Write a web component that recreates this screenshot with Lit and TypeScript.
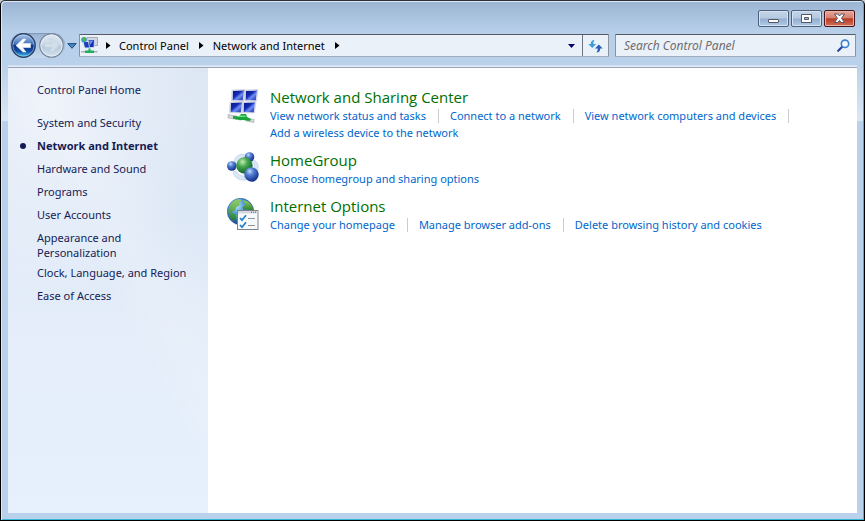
import { LitElement, html, css, svg } from 'lit';
import { customElement, state } from 'lit/decorators.js';

interface Category {
  title: string;
  icon: unknown;
  tasks: string[];
}

const networkIcon = html`<svg width="32" height="34" viewBox="0 0 32 34" aria-hidden="true">
  <defs>
    <linearGradient id="scr" x1="0" y1="0" x2="1" y2="1">
      <stop offset="0" stop-color="#0a1a86" /><stop offset=".4" stop-color="#1228b4" />
      <stop offset=".6" stop-color="#6f8ff4" /><stop offset="1" stop-color="#0d1fa4" />
    </linearGradient>
  </defs>
  ${[[5, 1], [18, 1], [3, 13], [16, 13]].map(([x, y]) => svg`
    <path d="M${x} ${y}l13-.5-1.500 11.500-12-.3z" fill="#dfe3ec" stroke="#b9bfcc" stroke-width=".5" />
    <path d="M${x + 1} ${y + 1}l11-.4-1.300 9.600-10-.2z" fill="url(#scr)" />`)}
  <path d="M1 25.500l9 1.500v3.500l-9-1.500z" fill="#d5d8dc" stroke="#8e949b" stroke-width=".5" />
  <path d="M19 29l8 1.500v3l-8-1.500z" fill="#d5d8dc" stroke="#8e949b" stroke-width=".5" />
  <path d="M6 27l6 .5 2-2.500h5l1 3 4 2-1 2-7-1-3 .3-7-1.800z" fill="#17a53a" />
  <path d="M12 26.500h6l1 1.500h-7z" fill="#6fe07f" />
</svg>`;

const homegroupIcon = html`<svg width="32" height="32" viewBox="0 0 32 32" aria-hidden="true">
  <defs>
    <radialGradient id="blu" cx=".38" cy=".28" r=".75">
      <stop offset="0" stop-color="#c4dcfb" /><stop offset=".35" stop-color="#5480d2" />
      <stop offset="1" stop-color="#0b2a86" />
    </radialGradient>
    <radialGradient id="grn" cx=".38" cy=".28" r=".75">
      <stop offset="0" stop-color="#c3efb0" /><stop offset=".4" stop-color="#46a54f" />
      <stop offset="1" stop-color="#0a6127" />
    </radialGradient>
  </defs>
  <path d="M7 9c2-6 7-8 13-6l-3 3C13 6 10 8 10 13z" fill="#dbe7f7" stroke="#a9c1e4" stroke-width=".5" />
  <path d="M27 8c5 3 5 8 3 12l-3-2c1-4 0-6-2-8z" fill="#dbe7f7" stroke="#a9c1e4" stroke-width=".5" />
  <path d="M6 20c1 6 7 9 13 8l-2-4c-4 0-6-2-8-5z" fill="#dbe7f7" stroke="#a9c1e4" stroke-width=".5" />
  <circle cx="22.500" cy="5" r="4.800" fill="url(#blu)" />
  <circle cx="4.800" cy="14" r="4.800" fill="url(#blu)" />
  <circle cx="17.500" cy="13.500" r="8.200" fill="url(#grn)" />
  <circle cx="24.500" cy="22.500" r="7.200" fill="url(#blu)" />
</svg>`;

const internetIcon = html`<svg width="32" height="33" viewBox="0 0 32 33" aria-hidden="true">
  <defs>
    <radialGradient id="sea" cx=".35" cy=".28" r=".75">
      <stop offset="0" stop-color="#bfe9fb" /><stop offset=".45" stop-color="#3f8fd6" />
      <stop offset="1" stop-color="#123c8c" />
    </radialGradient>
    <linearGradient id="land" x1="0" y1="0" x2="0" y2="1">
      <stop offset="0" stop-color="#8fd05c" /><stop offset="1" stop-color="#257a2e" />
    </linearGradient>
  </defs>
  <circle cx="13.500" cy="13.500" r="13.200" fill="url(#sea)" stroke="#2b5d9c" stroke-width=".6" />
  <path d="M2.500 8C5 3 9 1 13 1.200l2 2-3 1.800 1 2-4 2.500L8 13l-2-.5-1 2 4 2.500-.5 4-2 2.500C2 20 0 14 2.500 8z" fill="url(#land)" opacity=".9" />
  <path d="M16 2l5 1.500c3 2 5 5 5.500 8.500l-3 1-3-2-4 1-1-3 3-2z" fill="url(#land)" />
  <path d="M9 17l4-1v9l-3-1z" fill="url(#land)" opacity=".8" />
  <rect x="10.500" y="12.500" width="20.500" height="19" fill="#f8f9fb" stroke="#7d828c" />
  <path d="M11 13h19.500v2.500H11z" fill="#d4d9e1" />
  <path d="M24 14.200h1M26 14.200h1M28 14.200h1" stroke="#5c6470" />
  <path d="M13 20l2 2.200 4-5M13 27l2 2.200 4-5" fill="none" stroke="#2382cf" stroke-width="1.800" />
  <path d="M21 20.500h7M21 27.500h7" stroke="#8b929c" stroke-width="1.200" />
</svg>`;

const categories: Category[] = [
  {
    title: 'Network and Sharing Center',
    icon: networkIcon,
    tasks: [
      'View network status and tasks',
      'Connect to a network',
      'View network computers and devices',
      'Add a wireless device to the network',
    ],
  },
  { title: 'HomeGroup', icon: homegroupIcon, tasks: ['Choose homegroup and sharing options'] },
  {
    title: 'Internet Options',
    icon: internetIcon,
    tasks: ['Change your homepage', 'Manage browser add-ons', 'Delete browsing history and cookies'],
  },
];

const places = [
  'System and Security',
  'Network and Internet',
  'Hardware and Sound',
  'Programs',
  'User Accounts',
  'Appearance and Personalization',
  'Clock, Language, and Region',
  'Ease of Access',
];

const reset = css`
  * { box-sizing: border-box; }
  button { padding: 0; border: 0; background: none; font: inherit; color: inherit; display: flex; align-items: center; justify-content: center; }
  a { color: inherit; text-decoration: none; }
  a:hover { text-decoration: underline; }
  ul, ol { list-style: none; margin: 0; padding: 0; }
  svg { display: block; flex: none; }
`;

@customElement('caption-buttons')
class CaptionButtons extends LitElement {
  static styles = [reset, css`
    :host { display: flex; justify-content: flex-end; gap: 2px; height: 32px; padding: 9px 2px 0 0; }
    button {
      width: 31px; height: 17px; border: 1px solid #4e6079; border-radius: 2px;
      background: linear-gradient(#c3d4e8 0, #b5c9e0 48%, #92aed0 52%, #b0cbe6 100%);
      box-shadow: inset 0 0 0 1px #d5e3f3;
    }
    .close {
      border-color: #47141a;
      background: linear-gradient(#e5a79c 0, #d6806f 46%, #b83a24 52%, #d27058 100%);
      box-shadow: inset 0 0 0 1px #eab5a9;
    }
  `];

  render() {
    return html`
      <button aria-label="Minimize"><svg width="13" height="11" viewBox="0 0 13 11">
        <rect x="1.500" y="6.500" width="10" height="3" rx=".5" fill="#fff" stroke="#535666" /></svg></button>
      <button aria-label="Maximize"><svg width="13" height="11" viewBox="0 0 13 11">
        <path d="M1.500 1.500h10v8h-10zM4.500 4.500v2h4v-2z" fill="#fff" fill-rule="evenodd" stroke="#535666" /></svg></button>
      <button class="close" aria-label="Close"><svg width="13" height="11" viewBox="0 0 13 11">
        <path d="M1.500 1h3.200l1.800 2 1.800-2h3.200L8.500 5.300l3 4.200H8.200L6.500 7.400 4.800 9.500H1.500l3-4.200z" fill="#fff" stroke="#535666" /></svg></button>
    `;
  }
}

@customElement('explorer-bar')
class ExplorerBar extends LitElement {
  static styles = [reset, css`
    :host { display: flex; align-items: center; height: 25px; padding: 0 1px 0 2px; }
    .travel {
      display: flex; gap: 3px; padding: 0 1px; border-radius: 13px;
      background: linear-gradient(#98b3d2, #c6daee); box-shadow: inset 0 1px 1px #7e97b6;
    }
    .drop { width: 14px; height: 22px; }
    .address, .search {
      display: flex; height: 23px; min-width: 0; background: #ebf1f9;
      border: 1px solid; border-color: #565b67 #8b929f #a2abba #8b929f; border-radius: 1px;
    }
    .address { flex: 1; }
    .search { flex: 0 0 28.500%; margin-left: 6px; align-items: center; padding: 0 5px 0 8px; }
    .crumbs { display: flex; align-items: center; flex: 1; padding-left: 1px; color: #000; white-space: nowrap; }
    .crumbs li { display: flex; align-items: center; }
    .crumbs .arrow { margin: 0 9px 0 10px; }
    .crumbs .place .arrow { margin: 0 8px; }
    .history { width: 21px; }
    .refresh { width: 26px; border-left: 1px solid #6d7380; }
    input {
      flex: 1; min-width: 0; padding: 0; border: 0; outline: 0; background: none;
      font: inherit; font-size: 12px; color: #000;
    }
    input::placeholder { color: #6d6d6d; font-style: italic; opacity: 1; }
  `];

  render() {
    const arrow = html`<svg class="arrow" width="5" height="7" viewBox="0 0 5 7" aria-hidden="true"><path d="M0 0l4.500 3.500L0 7z" fill="#000" /></svg>`;
    return html`
      <div class="travel">
        <button aria-label="Back"><svg width="25" height="25" viewBox="0 0 25 25">
          <defs>
            <linearGradient id="b" x1="0" y1="0" x2="0" y2="1">
              <stop offset="0" stop-color="#b4cbea" /><stop offset=".45" stop-color="#3d6fbb" />
              <stop offset=".5" stop-color="#0c3588" /><stop offset=".75" stop-color="#124fa6" />
              <stop offset="1" stop-color="#46d2f4" />
            </linearGradient>
          </defs>
          <circle cx="12.500" cy="12.500" r="11.700" fill="url(#b)" stroke="#2c3f66" stroke-width="1.400" />
          <circle cx="12.500" cy="12.500" r="10.600" fill="none" stroke="#c3dcf5" stroke-width=".7" opacity=".7" />
          <path d="M5 12.500l7-6.500h3l-3.500 4.500h8v4h-8L15 19h-3z" fill="#fff" stroke="#e8eef8" stroke-width=".6" stroke-linejoin="round" />
        </svg></button>
        <button aria-label="Forward"><svg width="25" height="25" viewBox="0 0 25 25">
          <defs>
            <linearGradient id="f" x1="0" y1="0" x2="0" y2="1">
              <stop offset="0" stop-color="#dce6f1" /><stop offset=".48" stop-color="#ccd9e7" />
              <stop offset=".52" stop-color="#b6c8da" /><stop offset="1" stop-color="#d3e3f1" />
            </linearGradient>
          </defs>
          <circle cx="12.500" cy="12.500" r="11.700" fill="url(#f)" stroke="#75859b" stroke-width="1.200" />
          <circle cx="12.500" cy="12.500" r="10.600" fill="none" stroke="#edf3f9" stroke-width=".8" />
          <path d="M20 12.500l-7-6.500h-3l3.500 4.500h-8v4h8L10 19h3z" fill="#d3dfeb" stroke="#bccad9" stroke-width=".5" stroke-linejoin="round" />
        </svg></button>
      </div>
      <button class="drop" aria-label="Recent pages"><svg width="10" height="6" viewBox="0 0 10 6">
        <path d="M.8.600h8.400L5 5.300z" fill="#3b8ccb" stroke="#1b3e70" stroke-width=".9" /></svg></button>
      <nav class="address" aria-label="Address">
        <ol class="crumbs">
          <li class="place"><svg width="17" height="17" viewBox="0 0 17 17" aria-hidden="true">
            <path d="M6 .5h10.500v8H6z" fill="#d3d8e0" stroke="#8c939e" stroke-width=".7" />
            <path d="M2 4.500h8v6.500H3.500z" fill="#1b3ec0" stroke="#dfe4ee" />
            <path d="M7 2.500h6.500l-.5 8H8.500z" fill="#1430b0" stroke="#dfe4ee" stroke-width=".8" />
            <path d="M8 3.500h4.500L9 8z" fill="#6e93f2" />
            <circle cx="3" cy="2.800" r="2.800" fill="#3a96d8" /><path d="M1 2l2-2 2 1-1 2 1 2-3-1z" fill="#4fb845" />
            <path d="M7.500 11.500h2v2h3.500v2.500h-9v-2.500h3.500z" fill="#1fae5c" />
            <path d="M0 14h4v1.500H0zM13 14h3.500v1.500H13z" fill="#a9b0ba" />
          </svg>${arrow}</li>
          <li><a href="#control-panel">Control Panel</a>${arrow}</li>
          <li><a href="#network">Network and Internet</a>${arrow}</li>
        </ol>
        <button class="history" aria-label="Previous locations"><svg width="7" height="4" viewBox="0 0 7 4"><path d="M0 0h7L3.500 4z" fill="#00006a" /></svg></button>
        <button class="refresh" aria-label="Refresh"><svg width="15" height="14" viewBox="0 0 15 14">
          <path d="M6.500 1C4 1 2.800 2.300 2.800 5H.3L4.200 9l3.900-4H5.300C5.300 3.300 5.600 2.200 6.500 1z" fill="#3d9bdc" />
          <path d="M8.500 13.500c2.500 0 3.700-1.300 3.700-4h2.500L10.800 5.500 6.900 9.500h2.800c0 1.700-.3 2.800-1.200 4z" fill="#2a5fb8" />
        </svg></button>
      </nav>
      <label class="search">
        <input type="text" placeholder="Search Control Panel" aria-label="Search Control Panel" />
        <svg width="13" height="13" viewBox="0 0 13 13" aria-hidden="true">
          <path d="M5.500 7.500L1.200 11.800" stroke="#2446a0" stroke-width="2.200" stroke-linecap="round" />
          <circle cx="8" cy="4.800" r="3.700" fill="#f3f8fd" stroke="#3a80cc" stroke-width="1.600" />
        </svg>
      </label>
    `;
  }
}

@customElement('place-list')
class PlaceList extends LitElement {
  static styles = [reset, css`
    :host {
      display: block; flex: none; width: 200px; padding: 14px 12px 14px 29px; color: #151c55; line-height: 15px;
      background:
        linear-gradient(62deg, transparent 0 50%, rgba(255, 255, 255, .14) 60%, transparent 76%),
        radial-gradient(ellipse 170px 200px at 15% 40px, rgba(250, 251, 255, .55), transparent),
        linear-gradient(#dde7f4 0, #dde8f6 140px, #e4edf9 260px, #e6f1fd 100%);
    }
    .home { display: block; margin-bottom: 14px; }
    li { position: relative; padding: 4px 0; }
    .long { padding-right: 40px; padding-bottom: 1px; }
    .current { font-weight: bold; }
    .current::before {
      content: ''; position: absolute; left: -17px; top: 9px; width: 6px; height: 6px;
      border-radius: 50%; background: #151c55;
    }
  `];

  @state() private current = 'Network and Internet';

  render() {
    return html`
      <a class="home" href="#home">Control Panel Home</a>
      <ul>${places.map((p) => html`
        <li class=${p === this.current ? 'current' : p.startsWith('Appearance') ? 'long' : ''}><a href="#place">${p}</a></li>`)}
      </ul>`;
  }
}

@customElement('category-list')
class CategoryList extends LitElement {
  static styles = [reset, css`
    :host { display: flex; flex: 1; flex-direction: column; gap: 9px; min-width: 0; padding: 19px; background: #fff; }
    section { display: flex; gap: 11px; }
    .icon { flex: none; width: 32px; padding-top: 2px; height: 34px; }
    h2 { margin: 0; font: 15px/20px 'Open Sans', 'Noto Sans', sans-serif; color: #007000; }
    ul { display: flex; flex-wrap: wrap; line-height: 17px; color: #0066cc; }
    li { display: flex; align-items: center; }
    li:not(:last-child)::after { content: ''; width: 1px; height: 14px; margin: 0 11px 0 12px; background: #ccc; }
  `];

  render() {
    return categories.map((c) => html`
      <section>
        <div class="icon">${c.icon}</div>
        <div>
          <h2><a href="#category">${c.title}</a></h2>
          <ul>${c.tasks.map((t) => html`<li><a href="#task">${t}</a></li>`)}</ul>
        </div>
      </section>`);
  }
}

@customElement('app-root')
class AppRoot extends LitElement {
  static styles = [reset, css`
    :host { display: block; background: #c9ced6; font: 11px/15px 'Noto Sans', 'Open Sans', sans-serif; }
    .window {
      display: flex; flex-direction: column; min-height: 100vh; padding: 0 7px 7px;
      border: 1px solid #000; border-top-color: #2b2f36; border-radius: 5px 5px 0 0;
      background: linear-gradient(#9ab4d2 0, #b7cfe9 30px, #b9d1ea 64px, #dbe7f5 120px, #b9d1ea 120px);
      box-shadow: inset 1px 1px #dce9f6, inset -1px -1px #35b8d8;
    }
    .content {
      display: flex; flex: 1; margin-top: 9px; border-top: 1px solid #9aa3b8;
      box-shadow: 0 -1px #dfe9f5, 0 -2px #d3e1f1;
    }
  `];

  render() {
    return html`
      <div class="window">
        <caption-buttons></caption-buttons>
        <explorer-bar></explorer-bar>
        <div class="content">
          <place-list></place-list>
          <category-list></category-list>
        </div>
      </div>`;
  }
}
